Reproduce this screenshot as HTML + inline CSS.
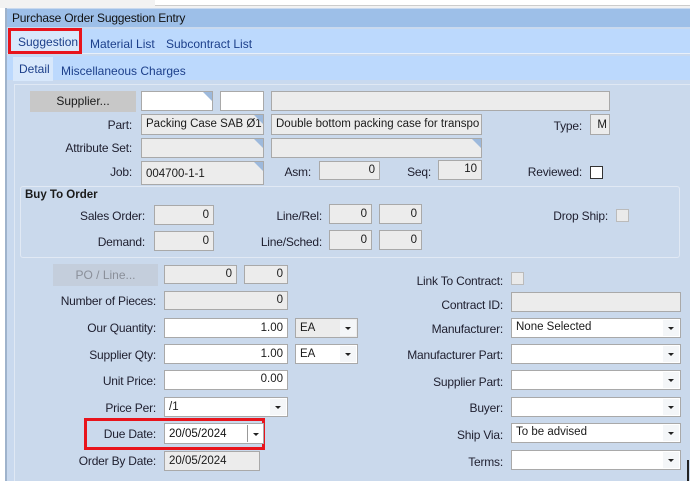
<!DOCTYPE html>
<html><head><style>
*{box-sizing:border-box;margin:0;padding:0}
body{width:690px;height:481px;overflow:hidden;background:#fff;font-family:"Liberation Sans",sans-serif;font-size:12px;color:#1a1a1a;position:relative}
.a{position:absolute}
.lbl{position:absolute;text-align:right;white-space:nowrap;font-size:12px;color:#1e1e2e;letter-spacing:-0.2px}
.box{position:absolute;background:#ececec;border:1px solid #a9a9a9;font-size:11.5px;padding:3px 4px 0;white-space:nowrap;overflow:hidden}
.w{background:#fff}
.r{text-align:right}
.cb{position:absolute;width:13px;height:13px;border:1px solid #bbb;background:#eaeaea}
.dd{position:absolute;right:1px;top:1px;bottom:1px;width:16px;background:#f4f6f8;}
.dd:after{content:"";position:absolute;left:5px;top:50%;margin-top:-1px;border-left:3px solid transparent;border-right:3px solid transparent;border-top:3px solid #222}
.tri{position:absolute;right:0;top:0;width:0;height:0;border-left:9px solid transparent;border-top:9px solid #9db9dc}
</style></head><body>
<div class="a" style="left:0;top:0;width:690px;height:8px;background:#f2f2f2"></div>
<div class="a" style="left:155px;top:0;width:535px;height:6px;background:#fff;border-bottom:1px solid #ccc"></div>
<div class="a" style="left:5px;top:8px;width:685px;height:473px;background:#c9d9ee;border-left:2px solid #9fb3cc"></div>
<div class="a" style="left:7px;top:9px;width:683px;height:18px;background:#9dbfe8;font-size:12px;padding:2px 5px;color:#111;letter-spacing:-0.2px">Purchase Order Suggestion Entry</div>
<div class="a" style="left:7px;top:29px;width:683px;height:25px;background:#bcd9fd;border-bottom:1px solid #e8f0fa"></div>
<div class="a" style="left:10px;top:30px;width:70px;height:24px;background:#d8e8fb"></div>
<div class="a" style="left:8px;top:28px;width:74px;height:26px;border:3px solid #e8141c"></div>
<div class="a" style="left:18px;top:35px;color:#1c3f8a">Suggestion</div>
<div class="a" style="left:90px;top:37px;color:#1c3f8a">Material List</div>
<div class="a" style="left:166px;top:37px;color:#1c3f8a">Subcontract List</div>
<div class="a" style="left:7px;top:56px;width:683px;height:24px;background:#bcd9fd"></div>
<div class="a" style="left:13px;top:57px;width:40px;height:24px;background:#d8e8fb"></div>
<div class="a" style="left:19px;top:62px;color:#1c3f8a">Detail</div>
<div class="a" style="left:61px;top:64px;color:#1c3f8a">Miscellaneous Charges</div>
<div class="a" style="left:14px;top:84px;width:676px;height:397px;background:#cad9ec;border-top:1px solid #dfe8f4;border-left:1px solid #dfe8f4"></div>

<div class="a" style="left:30px;top:91px;width:106px;height:21px;background:#c8c8c8;text-align:center;padding-top:3px">Supplier...</div>
<div class="box w" style="left:141px;top:91px;width:72px;height:20px"><i class="tri"></i></div>
<div class="box w" style="left:220px;top:91px;width:44px;height:20px"></div>
<div class="box" style="left:271px;top:91px;width:339px;height:20px"></div>

<div class="lbl" style="right:558px;top:118px">Part:</div>
<div class="box" style="left:141px;top:114px;width:123px;height:21px">Packing Case SAB Ø1<i class="tri"></i></div>
<div class="box" style="left:271px;top:114px;width:211px;height:21px">Double bottom packing case for transpo</div>
<div class="lbl" style="right:108px;top:119px">Type:</div>
<div class="box" style="left:590px;top:114px;width:20px;height:21px;padding-top:4px;text-align:right;padding-right:2px">M</div>

<div class="lbl" style="right:558px;top:141px">Attribute Set:</div>
<div class="box" style="left:141px;top:138px;width:123px;height:20px"><i class="tri"></i></div>
<div class="box" style="left:271px;top:138px;width:211px;height:20px"><i class="tri"></i></div>

<div class="lbl" style="right:558px;top:165px">Job:</div>
<div class="box" style="left:141px;top:161px;width:123px;height:24px;padding-top:6px">004700-1-1<i class="tri"></i></div>
<div class="lbl" style="right:379px;top:165px">Asm:</div>
<div class="box r" style="left:319px;top:161px;width:61px;height:19px;padding-top:2px">0</div>
<div class="lbl" style="right:259px;top:165px">Seq:</div>
<div class="box r" style="left:438px;top:160px;width:44px;height:20px;padding-top:2px">10</div>
<div class="lbl" style="right:108px;top:165px">Reviewed:</div>
<div class="cb" style="left:590px;top:166px;background:#fff;border-color:#333"></div>

<div class="a" style="left:20px;top:186px;width:660px;height:72px;border:1px solid #e1e9f4;border-radius:3px"></div>
<div class="a" style="left:25px;top:189px;font-size:11.5px;font-weight:bold">Buy To Order</div>
<div class="lbl" style="right:545px;top:209px">Sales Order:</div>
<div class="box r" style="left:154px;top:205px;width:60px;height:20px">0</div>
<div class="lbl" style="right:368px;top:209px">Line/Rel:</div>
<div class="box r" style="left:329px;top:204px;width:43px;height:20px">0</div>
<div class="box r" style="left:379px;top:204px;width:43px;height:20px">0</div>
<div class="lbl" style="right:82px;top:209px">Drop Ship:</div>
<div class="cb" style="left:616px;top:209px"></div>
<div class="lbl" style="right:545px;top:235px">Demand:</div>
<div class="box r" style="left:154px;top:231px;width:60px;height:20px">0</div>
<div class="lbl" style="right:368px;top:235px">Line/Sched:</div>
<div class="box r" style="left:329px;top:230px;width:43px;height:20px">0</div>
<div class="box r" style="left:379px;top:230px;width:43px;height:20px">0</div>

<div class="a" style="left:53px;top:264px;width:105px;height:22px;background:#c4cedc;color:#8a8f99;text-align:center;padding-top:4px">PO / Line...</div>
<div class="box r" style="left:164px;top:265px;width:73px;height:19px;padding-top:2px">0</div>
<div class="box r" style="left:244px;top:265px;width:44px;height:19px;padding-top:2px">0</div>
<div class="lbl" style="right:534px;top:294px">Number of Pieces:</div>
<div class="box r" style="left:164px;top:291px;width:124px;height:19px;padding-top:2px">0</div>
<div class="lbl" style="right:534px;top:321px">Our Quantity:</div>
<div class="box w r" style="left:164px;top:318px;width:124px;height:20px">1.00</div>
<div class="box" style="left:295px;top:318px;width:63px;height:20px">EA<i class="dd"></i></div>
<div class="lbl" style="right:534px;top:348px">Supplier Qty:</div>
<div class="box w r" style="left:164px;top:344px;width:124px;height:20px">1.00</div>
<div class="box w" style="left:295px;top:344px;width:63px;height:20px">EA<i class="dd"></i></div>
<div class="lbl" style="right:534px;top:374px">Unit Price:</div>
<div class="box w r" style="left:164px;top:370px;width:124px;height:20px;padding-top:2px">0.00</div>
<div class="lbl" style="right:534px;top:401px">Price Per:</div>
<div class="box w" style="left:164px;top:397px;width:124px;height:20px">/1<i class="dd"></i></div>
<div class="a" style="left:84px;top:418px;width:181px;height:32px;border:3px solid #e8141c"></div>
<div class="lbl" style="right:534px;top:427px">Due Date:</div>
<div class="box w" style="left:164px;top:423px;width:100px;height:21px;padding-top:4px;color:#111">20/05/2024<i class="dd" style="background:#fff;border-left:1px solid #999;width:15px"></i></div>
<div class="lbl" style="right:534px;top:454px">Order By Date:</div>
<div class="box" style="left:164px;top:451px;width:96px;height:20px">20/05/2024</div>

<div class="lbl" style="right:187px;top:274px">Link To Contract:</div>
<div class="cb" style="left:511px;top:272px"></div>
<div class="lbl" style="right:187px;top:298px">Contract ID:</div>
<div class="box" style="left:511px;top:292px;width:170px;height:20px"></div>
<div class="lbl" style="right:187px;top:322px">Manufacturer:</div>
<div class="box w" style="left:511px;top:318px;width:170px;height:20px;padding-top:2px">None Selected<i class="dd"></i></div>
<div class="lbl" style="right:187px;top:348px">Manufacturer Part:</div>
<div class="box w" style="left:511px;top:344px;width:170px;height:20px"><i class="dd"></i></div>
<div class="lbl" style="right:187px;top:375px">Supplier Part:</div>
<div class="box w" style="left:511px;top:370px;width:170px;height:20px"><i class="dd"></i></div>
<div class="lbl" style="right:187px;top:401px">Buyer:</div>
<div class="box w" style="left:511px;top:397px;width:170px;height:20px"><i class="dd"></i></div>
<div class="lbl" style="right:187px;top:428px">Ship Via:</div>
<div class="box w" style="left:511px;top:423px;width:170px;height:20px;padding-top:2px">To be advised<i class="dd"></i></div>
<div class="lbl" style="right:187px;top:455px">Terms:</div>
<div class="box w" style="left:511px;top:450px;width:170px;height:20px"><i class="dd"></i></div>
<div class="a" style="left:687px;top:460px;width:2px;height:21px;background:#222"></div>
</body></html>
